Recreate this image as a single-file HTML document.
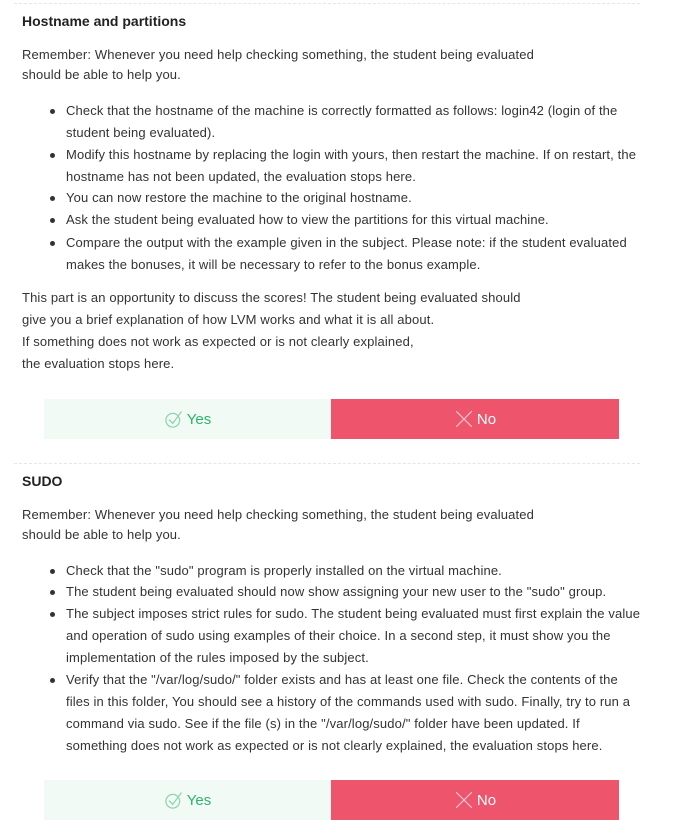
<!DOCTYPE html>
<html><head><meta charset="utf-8"><style>
body{margin:0;width:678px;height:835px;background:#fff;font-family:"Liberation Sans",sans-serif;color:#333;position:relative;overflow:hidden}
.a{position:absolute;white-space:nowrap;font-size:13px;letter-spacing:0.13px}
.h{position:absolute;font-weight:bold;font-size:14px;color:#222;left:22px}
.sep{position:absolute;left:14px;width:626px;border-top:1px dashed #e6e6e6}
.dot{position:absolute;width:5px;height:5px;border-radius:50%;background:#333}
.y{position:absolute;left:44px;width:287px;height:40px;background:#f2faf5;color:#2fb36d;font-size:15px;display:flex;align-items:center;justify-content:center}
.n{position:absolute;left:331px;width:288px;height:40px;background:#ee546c;color:#fff;font-size:15px;display:flex;align-items:center;justify-content:center}
svg{margin-right:3px}
</style></head><body>
<div class="sep" style="top:3px"></div>
<div class="h" style="top:13px">Hostname and partitions</div>
<div class="a" style="left:22px;top:47px">Remember: Whenever you need help checking something, the student being evaluated</div>
<div class="a" style="left:22px;top:67px">should be able to help you.</div>

<div class="dot" style="left:50px;top:109px"></div>
<div class="a" style="left:66px;top:103px">Check that the hostname of the machine is correctly formatted as follows: login42 (login of the</div>
<div class="a" style="left:66px;top:125px">student being evaluated).</div>
<div class="dot" style="left:50px;top:153px"></div>
<div class="a" style="left:66px;top:147px">Modify this hostname by replacing the login with yours, then restart the machine. If on restart, the</div>
<div class="a" style="left:66px;top:169px">hostname has not been updated, the evaluation stops here.</div>
<div class="dot" style="left:50px;top:196px"></div>
<div class="a" style="left:66px;top:190px">You can now restore the machine to the original hostname.</div>
<div class="dot" style="left:50px;top:218px"></div>
<div class="a" style="left:66px;top:212px">Ask the student being evaluated how to view the partitions for this virtual machine.</div>
<div class="dot" style="left:50px;top:241px"></div>
<div class="a" style="left:66px;top:235px">Compare the output with the example given in the subject. Please note: if the student evaluated</div>
<div class="a" style="left:66px;top:257px">makes the bonuses, it will be necessary to refer to the bonus example.</div>

<div class="a" style="left:22px;top:290px">This part is an opportunity to discuss the scores! The student being evaluated should</div>
<div class="a" style="left:22px;top:312px">give you a brief explanation of how LVM works and what it is all about.</div>
<div class="a" style="left:22px;top:334px">If something does not work as expected or is not clearly explained,</div>
<div class="a" style="left:22px;top:356px">the evaluation stops here.</div>

<div class="y" style="top:399px"><svg width="20" height="20" viewBox="0 0 16 16" fill="none" stroke="#8fd4ae" stroke-width="1"><circle cx="7" cy="9" r="5.5"/><path d="M4 8.5l3 3L14 2"/></svg>Yes</div>
<div class="n" style="top:399px"><svg width="20" height="20" viewBox="0 0 18 18" stroke="#fbd0d6" stroke-width="1"><path d="M2 2L16 16M16 2L2 16"/></svg>No</div>

<div class="sep" style="top:463px"></div>
<div class="h" style="top:473px">SUDO</div>
<div class="a" style="left:22px;top:507px">Remember: Whenever you need help checking something, the student being evaluated</div>
<div class="a" style="left:22px;top:527px">should be able to help you.</div>

<div class="dot" style="left:50px;top:569px"></div>
<div class="a" style="left:66px;top:563px">Check that the "sudo" program is properly installed on the virtual machine.</div>
<div class="dot" style="left:50px;top:590px"></div>
<div class="a" style="left:66px;top:584px">The student being evaluated should now show assigning your new user to the "sudo" group.</div>
<div class="dot" style="left:50px;top:612px"></div>
<div class="a" style="left:66px;top:606px">The subject imposes strict rules for sudo. The student being evaluated must first explain the value</div>
<div class="a" style="left:66px;top:628px">and operation of sudo using examples of their choice. In a second step, it must show you the</div>
<div class="a" style="left:66px;top:650px">implementation of the rules imposed by the subject.</div>
<div class="dot" style="left:50px;top:678px"></div>
<div class="a" style="left:66px;top:672px">Verify that the "/var/log/sudo/" folder exists and has at least one file. Check the contents of the</div>
<div class="a" style="left:66px;top:694px">files in this folder, You should see a history of the commands used with sudo. Finally, try to run a</div>
<div class="a" style="left:66px;top:716px">command via sudo. See if the file (s) in the "/var/log/sudo/" folder have been updated. If</div>
<div class="a" style="left:66px;top:738px">something does not work as expected or is not clearly explained, the evaluation stops here.</div>

<div class="y" style="top:780px"><svg width="20" height="20" viewBox="0 0 16 16" fill="none" stroke="#8fd4ae" stroke-width="1"><circle cx="7" cy="9" r="5.5"/><path d="M4 8.5l3 3L14 2"/></svg>Yes</div>
<div class="n" style="top:780px"><svg width="20" height="20" viewBox="0 0 18 18" stroke="#fbd0d6" stroke-width="1"><path d="M2 2L16 16M16 2L2 16"/></svg>No</div>
</body></html>
